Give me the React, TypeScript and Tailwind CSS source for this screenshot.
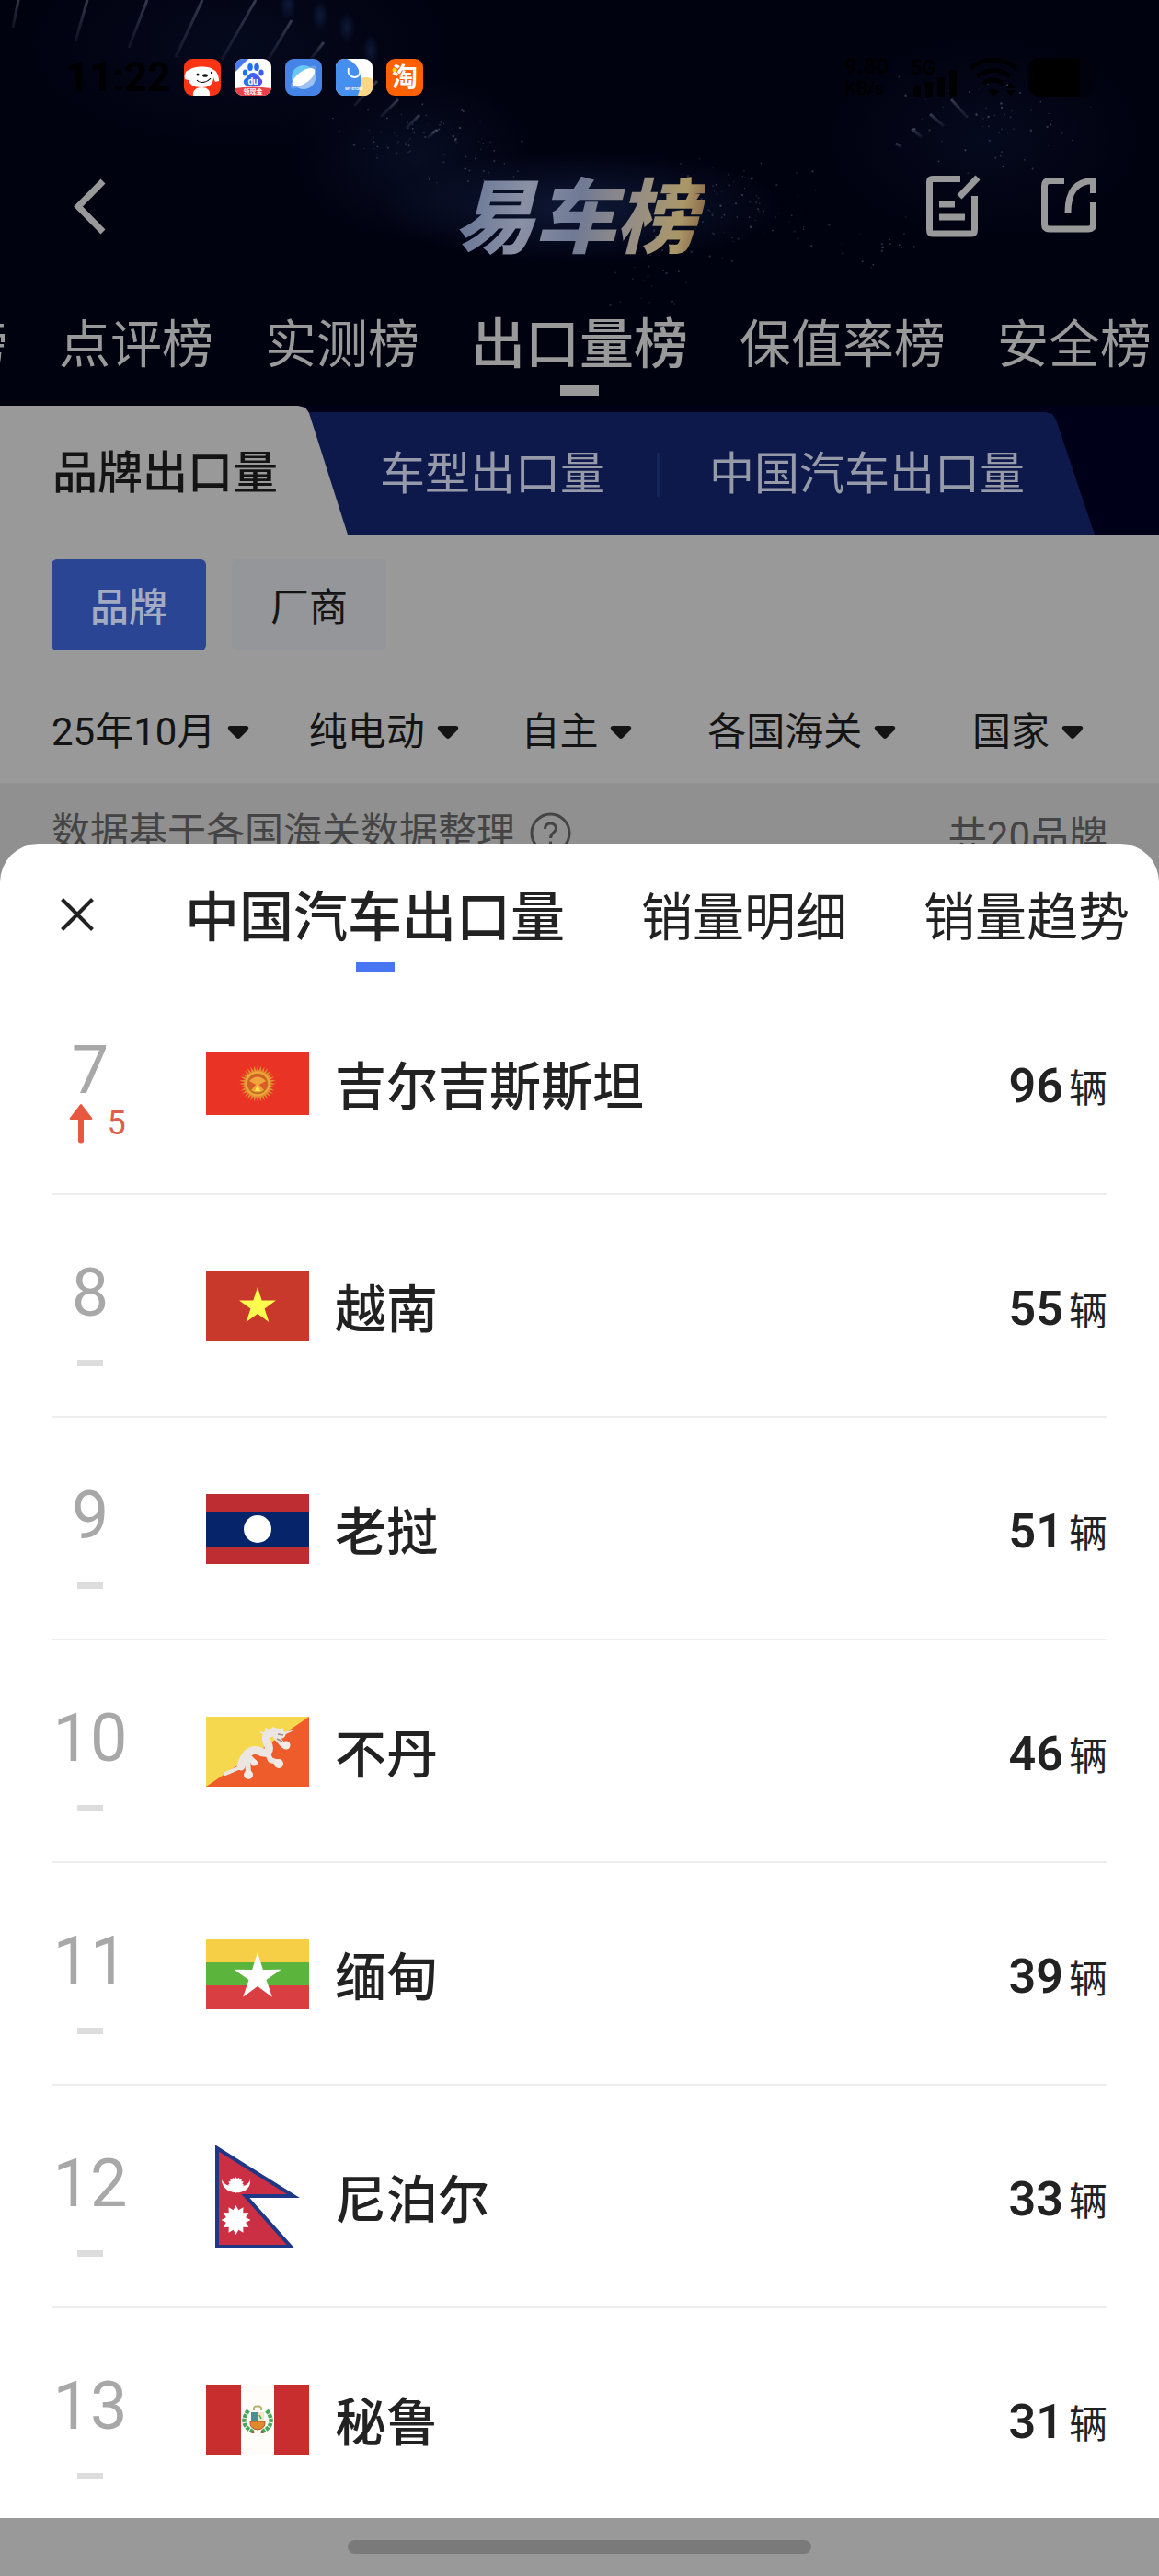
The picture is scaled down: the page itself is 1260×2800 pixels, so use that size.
import React from "react";

type Country = {
  rank: number;
  name: string;
  value: number;
  rise?: number;
  flag: React.ReactNode;
};

/* ---------- decorative header background ---------- */

const rays = [
  [20, 0, 14, 30],
  [95, 0, 82, 45],
  [160, 0, 140, 52],
  [220, 0, 191, 62],
  [278, 0, 241, 65],
  [317, 22, 292, 64],
  [352, 46, 338, 64],
  [410, 88, 385, 115],
  [433, 108, 414, 127],
  [456, 125, 442, 139],
  [475, 141, 465, 150],
  [1011, 124, 1026, 137],
  [991, 140, 1002, 149],
  [974, 156, 980, 160],
  [1034, 108, 1052, 128],
];

// small deterministic generator so the dust never jumps between renders
const scatter = (cx: number, cy: number, rx: number, ry: number, count: number, seed: number) => {
  let s = seed;
  const next = () => {
    s = (s * 16807) % 2147483647;
    return s / 2147483647;
  };
  return Array.from({ length: count }, () => ({
    x: cx + (next() + next() - 1) * rx,
    y: cy + (next() + next() - 1) * ry,
    r: 0.5 + next() * 0.8,
    o: 0.1 + next() * 0.3,
  }));
};

const dust = [
  ...scatter(450, 145, 90, 40, 60, 11),
  ...scatter(530, 180, 80, 30, 25, 23),
  ...scatter(800, 225, 110, 60, 90, 37),
  ...scatter(700, 300, 60, 40, 25, 41),
  ...scatter(1080, 125, 110, 70, 60, 59),
  ...scatter(960, 270, 120, 40, 20, 67),
];

const HeaderBackdrop: React.FC = () => (
  <svg
    className="absolute inset-0 w-full h-full"
    viewBox="0 0 1260 441"
    preserveAspectRatio="xMidYMin slice"
    fill="none"
    aria-hidden="true"
  >
    <defs>
      <radialGradient id="navyGlow">
        <stop offset="0" stopColor="#16264e" stopOpacity="0.6" />
        <stop offset="1" stopColor="#16264e" stopOpacity="0" />
      </radialGradient>
      <linearGradient id="ray" x1="0" y1="0" x2="0" y2="1">
        <stop offset="0" stopColor="#565a70" stopOpacity="0.6" />
        <stop offset="1" stopColor="#3a3f58" stopOpacity="0.25" />
      </linearGradient>
    </defs>
    <ellipse cx="260" cy="50" rx="230" ry="110" fill="url(#navyGlow)" opacity="0.35" />
    <ellipse cx="450" cy="170" rx="130" ry="90" fill="url(#navyGlow)" opacity="0.5" />
    <ellipse cx="630" cy="225" rx="220" ry="60" fill="url(#navyGlow)" />
    <ellipse cx="1070" cy="150" rx="170" ry="110" fill="url(#navyGlow)" opacity="0.35" />
    {[
      [313, 5],
      [348, 17],
      [377, 30],
      [403, 55],
    ].map(([x, y]) => (
      <ellipse key={x} cx={x} cy={y} rx="9" ry="17" fill="url(#navyGlow)" />
    ))}
    {rays.map(([x1, y1, x2, y2]) => (
      <line key={x1} x1={x1} y1={y1} x2={x2} y2={y2} stroke="url(#ray)" strokeWidth="3" />
    ))}
    {dust.map((d, i) => (
      <circle key={i} cx={d.x} cy={d.y} r={d.r} fill="#8f9bb5" opacity={d.o} />
    ))}
  </svg>
);

/* ---------- status bar ---------- */

const AppIcons: React.FC = () => (
  <div className="flex gap-[15px]">
    <svg className="size-10" viewBox="0 0 40 40">
      <rect width="40" height="40" rx="9" fill="#fb3415" />
      <path d="M6 12C9 8 28 7 32 12C36 13 38 19 38 24L34 25L32 20C32 28 27 31 19 31C11 31 6 28 5 23L1 22C0 17 2 12 6 12Z" fill="#fff" />
      <path d="M10 40C9 34 14 31 19 31C25 31 29 34 28 40Z" fill="#fff" />
      <path d="M14 23C17 27 25 26 29 21" stroke="#111" strokeWidth="1.2" fill="none" />
      <ellipse cx="23" cy="18" rx="3" ry="1.8" fill="#111" />
      <circle cx="15" cy="17" r="1.5" fill="#111" />
      <circle cx="30" cy="15" r="1.2" fill="#111" />
    </svg>
    <svg className="size-10" viewBox="0 0 40 40">
      <defs>
        <linearGradient id="paw" x1="0" y1="0" x2="1" y2="0">
          <stop offset="0" stopColor="#1a78f2" />
          <stop offset="1" stopColor="#5b4df0" />
        </linearGradient>
        <clipPath id="pawTile">
          <rect width="40" height="40" rx="9" />
        </clipPath>
      </defs>
      <g clipPath="url(#pawTile)">
        <rect width="40" height="40" fill="#fff" />
        <path d="M0 0H15L0 15Z" fill="#4a7bf0" />
        <ellipse cx="17" cy="9" rx="2.8" ry="4" fill="#1a73f0" />
        <ellipse cx="24" cy="9" rx="2.8" ry="4" fill="#2a6af0" />
        <ellipse cx="11.5" cy="15" rx="2.6" ry="3.6" fill="#1a73f0" />
        <ellipse cx="29" cy="15" rx="2.6" ry="3.6" fill="#3a60f0" />
        <path d="M20 15C25 15 27 20 29 22C32 25 29 30 25 29H15C11 30 8 25 11 22C14 20 15 15 20 15Z" fill="url(#paw)" />
        <path d="M0 32Q20 29 40 32V40H0Z" fill="#e8414a" />
        <text x="20" y="28" fontSize="10" fontWeight="700" textAnchor="middle" fill="#fff">du</text>
        <text x="20" y="38" fontSize="7" fontWeight="700" textAnchor="middle" fill="#fff">领现金</text>
      </g>
    </svg>
    <svg className="size-10" viewBox="0 0 40 40">
      <rect width="40" height="40" rx="9" fill="#4583e6" />
      <circle cx="20" cy="20" r="13" fill="#68c6f5" />
      <path d="M33 20A13 13 0 0 1 11 29L31 13Q33 16 33 20Z" fill="#9dbff2" />
      <ellipse cx="20" cy="20" rx="18" ry="6" transform="rotate(-40 20 20)" fill="#8fb5f0" opacity="0.5" />
      <ellipse cx="20" cy="20" rx="14.5" ry="6.5" transform="rotate(-36 20 20)" fill="#fff" />
    </svg>
    <svg className="size-10" viewBox="0 0 40 40">
      <defs>
        <clipPath id="storeTile">
          <rect width="40" height="40" rx="9" />
        </clipPath>
      </defs>
      <g clipPath="url(#storeTile)">
        <rect width="40" height="40" fill="#fff" />
        <circle cx="33" cy="34" r="14" fill="#fcd684" />
        <path d="M0 0H12C24 5 32 17 24 40H0Z" fill="#468fee" />
        <path d="M14 10C12 18 18 20 21 20C24 20 27 17 26 12" stroke="#fff" strokeWidth="1.8" fill="none" />
        <text x="20" y="34" fontSize="4" fontWeight="700" textAnchor="middle" fill="#fff">MY·STORE</text>
      </g>
    </svg>
    <svg className="size-10" viewBox="0 0 40 40">
      <rect width="40" height="40" rx="9" fill="#ff6000" />
      <circle cx="9" cy="12" r="2.5" fill="#ffd800" />
      <text x="20" y="30" fontSize="28" fontWeight="700" textAnchor="middle" fill="#fff">淘</text>
    </svg>
  </div>
);

const StatusBar: React.FC = () => (
  <div className="relative h-[168px] px-[72px] flex items-center">
    <span className="w-32 text-[44px] leading-[48px] font-bold text-black">11:22</span>
    <AppIcons />
    <div className="ml-auto flex items-center gap-3 text-black font-bold">
      <div className="w-[60px] text-[24px] leading-[24px]">
        <div>9.80</div>
        <div className="text-[20px]">KB/s</div>
      </div>
      <svg className="w-[52px] h-12 overflow-visible" viewBox="0 0 52 48">
        <text x="0" y="21" fontSize="22" fontWeight="700">5G</text>
        <rect x="3" y="34" width="8" height="11" rx="2" />
        <rect x="16" y="29" width="8" height="16" rx="2" />
        <rect x="29" y="24" width="8" height="21" rx="2" />
        <rect x="42" y="16" width="8" height="29" rx="2" />
      </svg>
      <svg className="w-[52px] h-11" viewBox="0 0 52 44" fill="none" stroke="#000" strokeWidth="5">
        <path d="M1 12Q26 -6 51 12" />
        <path d="M8 21Q26 8 44 21" />
        <path d="M15 29Q26 21 37 29" />
        <path d="M20 37Q26 32 32 37L26 43Z" fill="#000" strokeWidth="0" />
        <path d="M45 27L50 34H40ZM45 43L50 36H40Z" fill="#000" strokeWidth="0" />
      </svg>
      <div className="w-[70px] h-[42px] rounded-xl bg-[#02020c] overflow-hidden">
        <div className="w-14 h-full bg-black" />
      </div>
    </div>
  </div>
);

/* ---------- page header ---------- */

const TitleBar: React.FC = () => (
  <div className="relative h-[112px] px-[68px] flex items-center justify-between">
    <button aria-label="返回" className="w-[184px] pl-3">
      <svg className="w-[35px] h-[61px]" viewBox="0 0 35 61" fill="none" stroke="#999" strokeWidth="7">
        <path d="M32 3L5 30.5L32 58" />
      </svg>
    </button>
    <h1 className="pt-7 pr-2 text-[88px] leading-[112px] font-black italic bg-[linear-gradient(100deg,#5d6d90_0%,#8a91a6_30%,#707a95_50%,#958d86_70%,#aa9768_88%,#80583e_100%)] bg-clip-text text-transparent">
      易车榜
    </h1>
    <div className="flex gap-[66px]">
      <button aria-label="评价">
        <svg className="w-[59px] h-[68px]" viewBox="0 0 59 68" fill="none" stroke="#999" strokeWidth="7">
          <path d="M37 4.5H7Q3.5 4.500 3.5 8V60Q3.5 64 7 64H49Q52.5 64 52.5 60V23" />
          <path d="M14 32H31M14 46H42" />
          <path d="M36 24L56 3" />
        </svg>
      </button>
      <button aria-label="分享">
        <svg className="w-[60px] h-[68px]" viewBox="0 0 60 68" fill="none" stroke="#999" strokeWidth="7">
          <path d="M25 6.5H9Q3.5 6.5 3.5 12V54Q3.5 59 9 59H51Q56.5 59 56.5 54V30" />
          <path d="M29 41C29 18 38 7 56.5 6.5V20" />
        </svg>
      </button>
    </div>
  </div>
);

const RANK_TABS = ["榜", "点评榜", "实测榜", "出口量榜", "保值率榜", "安全榜"];

const RankTabs: React.FC = () => (
  <nav className="relative h-[161px] pt-[67px] pr-2 flex justify-end gap-14 overflow-hidden text-[#999]">
    {RANK_TABS.map((tab) =>
      tab === "出口量榜" ? (
        <a key={tab} href="#export" className="shrink-0 flex flex-col items-center">
          <span className="text-[59px] leading-[56px] font-medium">{tab}</span>
          <span className="mt-4 w-[42px] h-[11px] bg-[#999]" />
        </a>
      ) : (
        <a key={tab} href="#rank" className="shrink-0 text-[56px] leading-[56px]">
          {tab}
        </a>
      )
    )}
  </nav>
);

const ExportTabs: React.FC = () => (
  <div className="h-[140px] flex bg-[#000018] text-[49px]">
    <button className="relative z-10 shrink-0 w-[378px] pl-[57px] pt-2 text-left font-medium text-[#141414] bg-[#999] [clip-path:polygon(0_0,324px_0,332px_2px,336px_8px,100%_100%,0_100%)]">
      品牌出口量
    </button>
    <div className="-ml-12 mt-[7px] pt-0.5 pl-[83px] pr-[76px] flex items-center text-[#9599a8] bg-[#0d194a] [clip-path:polygon(0_0,calc(100%_-_54px)_0,calc(100%_-_46px)_2px,calc(100%_-_42px)_8px,100%_100%,0_100%)]">
      <button className="whitespace-nowrap">车型出口量</button>
      <span className="ml-14 mr-[54px] w-[3px] h-12 bg-[#172457]" />
      <button className="whitespace-nowrap">中国汽车出口量</button>
    </div>
  </div>
);

/* ---------- filters ---------- */

const FILTERS = [
  { label: "时间", value: "25年10月" },
  { label: "能源类型", value: "纯电动" },
  { label: "品牌类型", value: "自主" },
  { label: "数据来源", value: "各国海关" },
  { label: "排行维度", value: "国家" },
];

const Filters: React.FC = () => (
  <section className="pt-[27px] pb-[31px] bg-[#999] text-[42px] leading-[48px] text-[#141414] border-b-2 border-[#919191]">
    <div className="px-14 flex gap-7">
      <button className="w-[168px] h-[99px] pt-1.5 rounded-md bg-[#294594] text-[#a3abc2] font-medium">品牌</button>
      <button className="w-[168px] h-[99px] pt-1.5 rounded-md bg-[#949699]">厂商</button>
    </div>
    <div className="mt-[65px] pl-14 pr-[82px] grid grid-cols-[280fr_231fr_203fr_288fr_120fr]">
      {FILTERS.map((f) => (
        <label key={f.label} className="flex items-center gap-3 whitespace-nowrap">
          <select aria-label={f.label} className="appearance-none bg-transparent">
            <option>{f.value}</option>
          </select>
          <svg className="shrink-0 w-6 h-4" viewBox="0 0 24 16" fill="#141414">
            <path d="M3 1H21Q25 2 22 6L14 14Q12 16 10 14L2 6Q-1 2 3 1Z" />
          </svg>
        </label>
      ))}
    </div>
  </section>
);

const SourceNote: React.FC = () => (
  <div className="h-[106px] pt-7 px-14 flex justify-between items-start bg-[#909090] text-[42px] leading-[48px] text-[#444]">
    <div className="flex items-center gap-4">
      数据基于各国海关数据整理
      <svg className="size-[45px]" viewBox="0 0 45 45" fill="none" stroke="#444" strokeWidth="3">
        <circle cx="22.5" cy="22.5" r="20.5" />
        <path d="M16.5 18C16.5 10 28.5 10 28.5 17.5C28.5 22 22.5 22 22.5 28" />
        <path d="M22.5 31.5V35" />
      </svg>
    </div>
    <span className="pt-1">共20品牌</span>
  </div>
);

/* ---------- flags ---------- */

const starPoints = (cx: number, cy: number, outer: number, inner: number, tips: number) =>
  Array.from({ length: tips * 2 }, (_, i) => {
    const r = i % 2 ? inner : outer;
    const a = (Math.PI * i) / tips - Math.PI / 2;
    return `${(cx + r * Math.cos(a)).toFixed(2)},${(cy + r * Math.sin(a)).toFixed(2)}`;
  }).join(" ");

const Kyrgyzstan = (
  <svg className="w-28 h-[68px]" viewBox="0 0 112 68">
    <rect width="112" height="68" fill="#e93324" />
    <polygon points={starPoints(56, 34, 20, 14, 32)} fill="#e0902f" />
    <circle cx="56" cy="34" r="13.5" fill="#eea63a" />
    <circle cx="56" cy="34" r="10.5" fill="#dd5a2a" stroke="#b9701f" strokeWidth="1.5" />
    <path d="M47 31Q56 22 65 31L56 36ZM49 41L56 33L63 41Q56 46 49 41Z" fill="#f0a53c" />
    <path d="M53 42L56 35L59 42Z" fill="#ffe94d" />
  </svg>
);

const Vietnam = (
  <svg className="w-28 h-[76px]" viewBox="0 0 112 76">
    <rect width="112" height="76" fill="#c8382b" />
    <polygon points={starPoints(56, 38, 21, 8, 5)} fill="#fffb4f" />
  </svg>
);

const Laos = (
  <svg className="w-28 h-[76px]" viewBox="0 0 112 76">
    <rect width="112" height="76" fill="#bd2d31" />
    <rect y="19" width="112" height="38" fill="#06246a" />
    <circle cx="56" cy="38" r="15" fill="#fff" />
  </svg>
);

const Bhutan = (
  <svg className="w-28 h-[76px]" viewBox="0 0 112 76">
    <rect width="112" height="76" fill="#f6d84e" />
    <path d="M112 0V76H0Z" fill="#ee5c2b" />
    <g fill="none" stroke="#ebe6e2" strokeLinecap="round" strokeLinejoin="round">
      <path d="M21 62L35 56L42 49" strokeWidth="4" />
      <path d="M38 54C42 38 50 35 57 37C66 42 72 38 66 27C62 16 76 15 82 19" strokeWidth="9" />
      <path d="M66 38L70 47L79 50M45 46L46 61M48 45L53 50M76 22L84 31" strokeWidth="6" />
      <path d="M60 17L66 20L65 13L70 17L73 12L77 17L83 13L84 19L93 15" strokeWidth="2" />
    </g>
    <circle cx="79" cy="51" r="5" fill="#f2ece8" />
    <circle cx="46" cy="63" r="5" fill="#f2ece8" />
    <circle cx="87" cy="31" r="4.5" fill="#f2ece8" />
    <circle cx="52" cy="50" r="3.5" fill="#f2ece8" />
    <path d="M78 19L84 20M77 24L83 27" stroke="#a08a85" strokeWidth="1.5" />
  </svg>
);

const Myanmar = (
  <svg className="w-28 h-[76px]" viewBox="0 0 112 76">
    <rect width="112" height="26" fill="#f7cf47" />
    <rect y="25" width="112" height="26" fill="#5bb53c" />
    <rect y="50" width="112" height="26" fill="#d83e42" />
    <polygon points={starPoints(56, 41, 27, 10, 5)} fill="#fff" />
  </svg>
);

const Nepal = (
  <svg className="size-28" viewBox="0 0 112 112">
    <path d="M12 3L95 55H43L92 110H12Z" fill="#cb2f43" stroke="#1f3787" strokeWidth="4" />
    <path d="M17 37C21 48 46 48 48 37C50 56 17 56 17 37Z" fill="#fff" />
    <polygon points={starPoints(32.5, 43, 9, 7, 16)} fill="#fff" />
    <polygon points={starPoints(32.5, 81, 16, 11, 12)} fill="#fff" />
  </svg>
);

const Peru = (
  <svg className="w-28 h-[76px]" viewBox="0 0 112 76">
    <rect width="112" height="76" fill="#fefdf9" />
    <rect width="38" height="76" fill="#c92e2f" />
    <rect x="74" width="38" height="76" fill="#c92e2f" />
    <path d="M46 28C38 38 41 47 51 51M66 28C74 38 71 47 61 51" stroke="#46a85a" strokeWidth="4.5" strokeDasharray="4 1" fill="none" />
    <path d="M49 30H56V39H49Z" fill="#4b8f92" />
    <path d="M56 30H63V39H56Z" fill="#efe9c4" />
    <path d="M48 40H64Q65 48 56 49Q47 48 48 40Z" fill="#df8a2c" stroke="#b55428" />
    <path d="M52 28Q51 23 56 23.5Q61 23 60 28" stroke="#b9b26a" strokeWidth="2" fill="none" />
    <path d="M51 50V53M61 50V53" stroke="#a4603a" strokeWidth="2.5" />
    <path d="M58 33L60 37" stroke="#46a85a" strokeWidth="1.5" />
  </svg>
);

/* ---------- bottom sheet ---------- */

const COUNTRIES: Country[] = [
  { rank: 7, name: "吉尔吉斯斯坦", value: 96, rise: 5, flag: Kyrgyzstan },
  { rank: 8, name: "越南", value: 55, flag: Vietnam },
  { rank: 9, name: "老挝", value: 51, flag: Laos },
  { rank: 10, name: "不丹", value: 46, flag: Bhutan },
  { rank: 11, name: "缅甸", value: 39, flag: Myanmar },
  { rank: 12, name: "尼泊尔", value: 33, flag: Nepal },
  { rank: 13, name: "秘鲁", value: 31, flag: Peru },
];

const CountryRow: React.FC<{ item: Country }> = ({ item }) => (
  <li className="h-[242px] shrink-0 flex items-center border-b-2 border-[#eee]">
    <div className="w-[84px] pt-4 flex flex-col items-center">
      <span className="text-[72px] leading-[72px] text-[#a8a8a8]">{item.rank}</span>
      {item.rise ? (
        <span className="pl-4 flex items-center gap-[15px] text-[36px] leading-[43px] text-[#dd5f4b]">
          <svg className="w-[26px] h-[43px]" viewBox="0 0 26 43" fill="#e8573f">
            <path d="M13 0Q14 0 15 2L25 15Q26 17 24 17H16V41Q13 44 10 41V17H2Q0 17 1 15L11 2Q12 0 13 0Z" />
          </svg>
          {item.rise}
        </span>
      ) : (
        <span className="mt-9 w-7 h-[7px] bg-[#ddd]" />
      )}
    </div>
    <div className="ml-[84px] mt-0.5 w-28">{item.flag}</div>
    <span className="ml-7 pt-2.5 text-[56px] leading-[64px] font-medium text-[#222]">{item.name}</span>
    <span className="ml-auto pt-2.5 flex items-baseline gap-1.5 text-[#222]">
      <span className="text-[52px] leading-[64px] font-semibold">{item.value}</span>
      <span className="text-[42px] leading-[64px]">辆</span>
    </span>
  </li>
);

const ExportSheet: React.FC = () => (
  <section className="relative -mt-[42px] flex-1 min-h-0 flex flex-col rounded-t-[42px] bg-white overflow-hidden">
    <div className="h-[140px] shrink-0 flex items-start text-[#222] whitespace-nowrap overflow-hidden">
      <button aria-label="关闭" className="shrink-0 ml-[66px] mt-[59px]">
        <svg className="size-9" viewBox="0 0 36 36" fill="none" stroke="#222" strokeWidth="4">
          <path d="M1.5 1.5L34.5 34.5M34.5 1.5L1.5 34.5" />
        </svg>
      </button>
      <nav className="ml-[99px] pt-[49px] flex items-start gap-[83px] text-[56px] leading-[64px]">
        <a href="#export" className="flex flex-col items-center">
          <span className="text-[59px] font-medium">中国汽车出口量</span>
          <span className="mt-4 w-[42px] h-[11px] bg-[#4876f3]" />
        </a>
        <a href="#detail">销量明细</a>
        <a href="#trend">销量趋势</a>
      </nav>
    </div>
    <ul className="flex-1 min-h-0 px-14 flex flex-col overflow-y-auto [scrollbar-width:none]">
      {COUNTRIES.map((item) => (
        <CountryRow key={item.rank} item={item} />
      ))}
    </ul>
  </section>
);

export default function App() {
  return (
    <div className="h-screen flex flex-col overflow-hidden bg-[#999] font-['Roboto','Noto_Sans_CJK_SC',sans-serif]">
      <header className="relative shrink-0 overflow-hidden bg-[#010210]">
        <HeaderBackdrop />
        <StatusBar />
        <TitleBar />
        <RankTabs />
      </header>
      <ExportTabs />
      <Filters />
      <SourceNote />
      <ExportSheet />
      {/* Gesture bar */}
      <div className="h-[63px] shrink-0 pt-6 flex justify-center items-start bg-[#999]">
        <div className="w-[40%] h-[15px] rounded-full bg-[#7a7a7a]" />
      </div>
    </div>
  );
}
